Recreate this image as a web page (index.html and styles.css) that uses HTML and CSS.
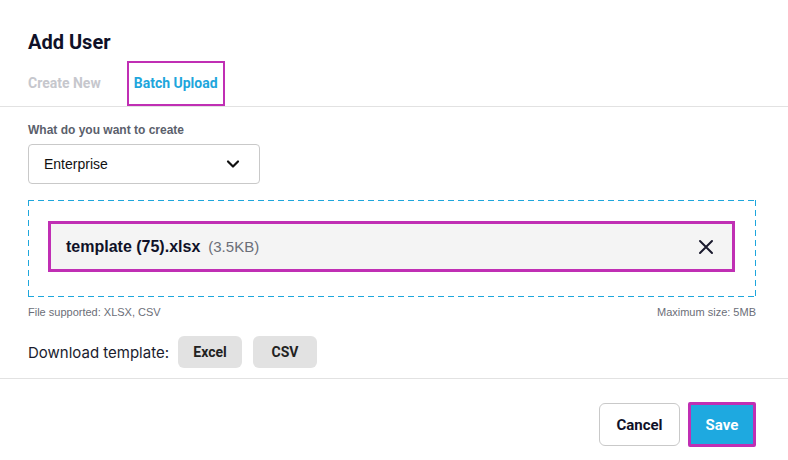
FILE: index.html
```html
<!DOCTYPE html>
<html>
<head>
<meta charset="utf-8">
<link rel="stylesheet" href="styles.css">
</head>
<body>
<div class="modal">
  <div class="head">
    <h1 class="title">Add User</h1>
    <div class="tabs">
      <div class="tab">Create New</div>
      <div class="tab tab-active">Batch Upload</div>
    </div>
  </div>
  <div class="body">
    <div class="label">What do you want to create</div>
    <div class="select">
      <span>Enterprise</span>
      <svg class="chev" width="14" height="10" viewBox="0 0 14 10"><path d="M2 2.5 L7 7.5 L12 2.5" fill="none" stroke="#111" stroke-width="2.2" stroke-linecap="round" stroke-linejoin="round"/></svg>
    </div>
    <div class="drop">
      <div class="file">
        <span class="fname">template (75).xlsx</span>
        <span class="fsize">(3.5KB)</span>
        <svg class="close" width="16" height="16" viewBox="0 0 16 16"><path d="M2 2 L14 14 M14 2 L2 14" stroke="#1a1a2e" stroke-width="2" stroke-linecap="round"/></svg>
      </div>
    </div>
    <div class="hints">
      <span>File supported: XLSX, CSV</span>
      <span>Maximum size: 5MB</span>
    </div>
    <div class="download">
      <span class="dl-label">Download template:</span>
      <button class="chip">Excel</button>
      <button class="chip">CSV</button>
    </div>
  </div>
  <div class="foot">
    <button class="btn btn-cancel">Cancel</button>
    <button class="btn btn-save">Save</button>
  </div>
</div>
</body>
</html>
```
FILE: styles.css
```css
* { box-sizing: border-box; }
html, body { margin: 0; padding: 0; background: #fff; }
body { width: 788px; height: 460px; overflow: hidden; font-family: "Liberation Sans", Arial, sans-serif; }
.modal { display: flex; flex-direction: column; }
.head { padding: 29px 28px 0; border-bottom: 1px solid #e2e2e2; }
.title { margin: 0; font-family: Roboto, sans-serif; font-weight: 700; font-size: 20px; line-height: 26px; color: #0f1128; }
.tabs { display: flex; gap: 26px; margin-top: 6px; align-items: stretch; }
.tab { font-family: Roboto, sans-serif; font-weight: 700; font-size: 14px; color: #c6c7cd; line-height: 45px; }
.tab-active { color: #1ea6dc; border: 2px solid #c02fb4; padding: 0 5px 0 5px; line-height: 41px; }
.body { padding: 16px 32px 0 28px; }
.label { font-size: 12px; font-weight: 700; color: #5b5f6c; line-height: 14px; }
.select { margin-top: 7px; width: 232px; height: 40px; border: 1px solid #c9c9c9; border-radius: 4px; display: flex; align-items: center; justify-content: space-between; padding: 0 19px 0 15px; font-size: 14px; color: #111; }
.chev { display: block; }
.drop {
  margin-top: 16px; height: 97px; padding: 21px 21px 0 20px;
  background:
    repeating-linear-gradient(90deg, #1ea6dc 0 6px, transparent 6px 10px) top left / 100% 1px no-repeat,
    repeating-linear-gradient(90deg, #1ea6dc 0 6px, transparent 6px 10px) bottom left / 100% 1px no-repeat,
    repeating-linear-gradient(180deg, #1ea6dc 0 6px, transparent 6px 10px) top left / 1px 100% no-repeat,
    repeating-linear-gradient(180deg, #1ea6dc 0 6px, transparent 6px 10px) top right / 1px 100% no-repeat;
}
.file { height: 51px; background: #f4f4f4; border: 3px solid #c02fb4; display: flex; align-items: center; padding: 0 18px 0 15px; }
.fname { font-size: 16px; font-weight: 700; color: #0f1128; }
.fsize { font-size: 15px; color: #6b6e78; margin-left: 8px; }
.close { margin-left: auto; }
.hints { display: flex; justify-content: space-between; font-size: 11px; color: #6b6e78; margin-top: 9px; line-height: 13px; }
.download { display: flex; align-items: center; margin-top: 17px; }
.dl-label { font-family: Inter, Roboto, sans-serif; font-size: 15px; color: #1a1c2e; margin-right: 9px; }
.chip { font-family: Roboto, sans-serif; font-weight: 700; font-size: 14px; color: #222; background: #e2e2e2; border: none; border-radius: 6px; width: 64px; height: 32px; margin-right: 11px; padding: 0; }
.foot { margin-top: 10px; border-top: 1px solid #e2e2e2; display: flex; justify-content: flex-end; gap: 8px; padding: 23px 32px 0 0; }
.btn { font-family: Roboto, sans-serif; font-weight: 700; font-size: 15px; height: 43px; border-radius: 6px; padding: 0; }
.btn-cancel { width: 81px; background: #fff; border: 1px solid #c9c9c9; color: #0f1128; margin-top: 1px; }
.btn-save { width: 68px; height: 45px; background: #1ea9e0; color: #fff; border: 3px solid #c02fb4; border-radius: 2px; }
```
